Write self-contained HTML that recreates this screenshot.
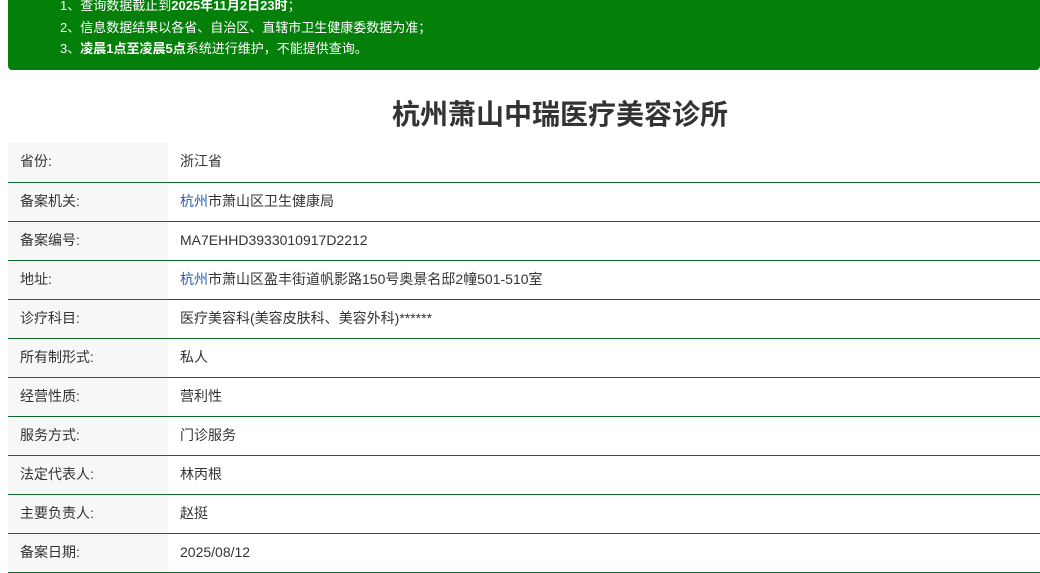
<!DOCTYPE html>
<html><head><meta charset="utf-8"><style>
body{margin:0;width:1040px;height:573px;overflow:hidden;background:#fff;font-family:"Liberation Sans","Noto Sans CJK SC",sans-serif;}
.top{position:absolute;left:8px;top:0;width:1032px;height:70px;background:#037f0a;border-radius:0 0 4px 4px;color:#fff;font-size:13px;}
.top div{position:absolute;left:52px;white-space:nowrap}
h1{position:absolute;left:0;width:1120px;top:93px;margin:0;text-align:center;font-size:28px;font-weight:bold;color:#333;}
table{position:absolute;left:8px;top:143px;width:1032px;border-collapse:collapse;font-size:14px;color:#333}
td{height:39px;padding:0 0 2px 0;box-sizing:border-box;border-bottom:1px solid #0c6a2a}
td.l{width:160px;background:#f7f7f7;padding-left:12px}
td.v{padding-left:12px}
.b{color:#2a5caa}
</style></head><body>
<div class="top">
<div style="top:-5px">1、查询数据截止到<b>2025年11月2日23时</b>；</div>
<div style="top:17px">2、信息数据结果以各省、自治区、直辖市卫生健康委数据为准；</div>
<div style="top:38px">3、<b>凌晨1点至凌晨5点</b>系统进行维护，不能提供查询。</div>
</div>
<h1>杭州萧山中瑞医疗美容诊所</h1>
<table>
<tr><td class="l">省份:</td><td class="v">浙江省</td></tr>
<tr><td class="l">备案机关:</td><td class="v"><span class="b">杭州</span>市萧山区卫生健康局</td></tr>
<tr><td class="l">备案编号:</td><td class="v">MA7EHHD3933010917D2212</td></tr>
<tr><td class="l">地址:</td><td class="v"><span class="b">杭州</span>市萧山区盈丰街道帆影路150号奥景名邸2幢501-510室</td></tr>
<tr><td class="l">诊疗科目:</td><td class="v">医疗美容科(美容皮肤科、美容外科)******</td></tr>
<tr><td class="l">所有制形式:</td><td class="v">私人</td></tr>
<tr><td class="l">经营性质:</td><td class="v">营利性</td></tr>
<tr><td class="l">服务方式:</td><td class="v">门诊服务</td></tr>
<tr><td class="l">法定代表人:</td><td class="v">林丙根</td></tr>
<tr><td class="l">主要负责人:</td><td class="v">赵挺</td></tr>
<tr><td class="l">备案日期:</td><td class="v">2025/08/12</td></tr>
</table>
</body></html>
